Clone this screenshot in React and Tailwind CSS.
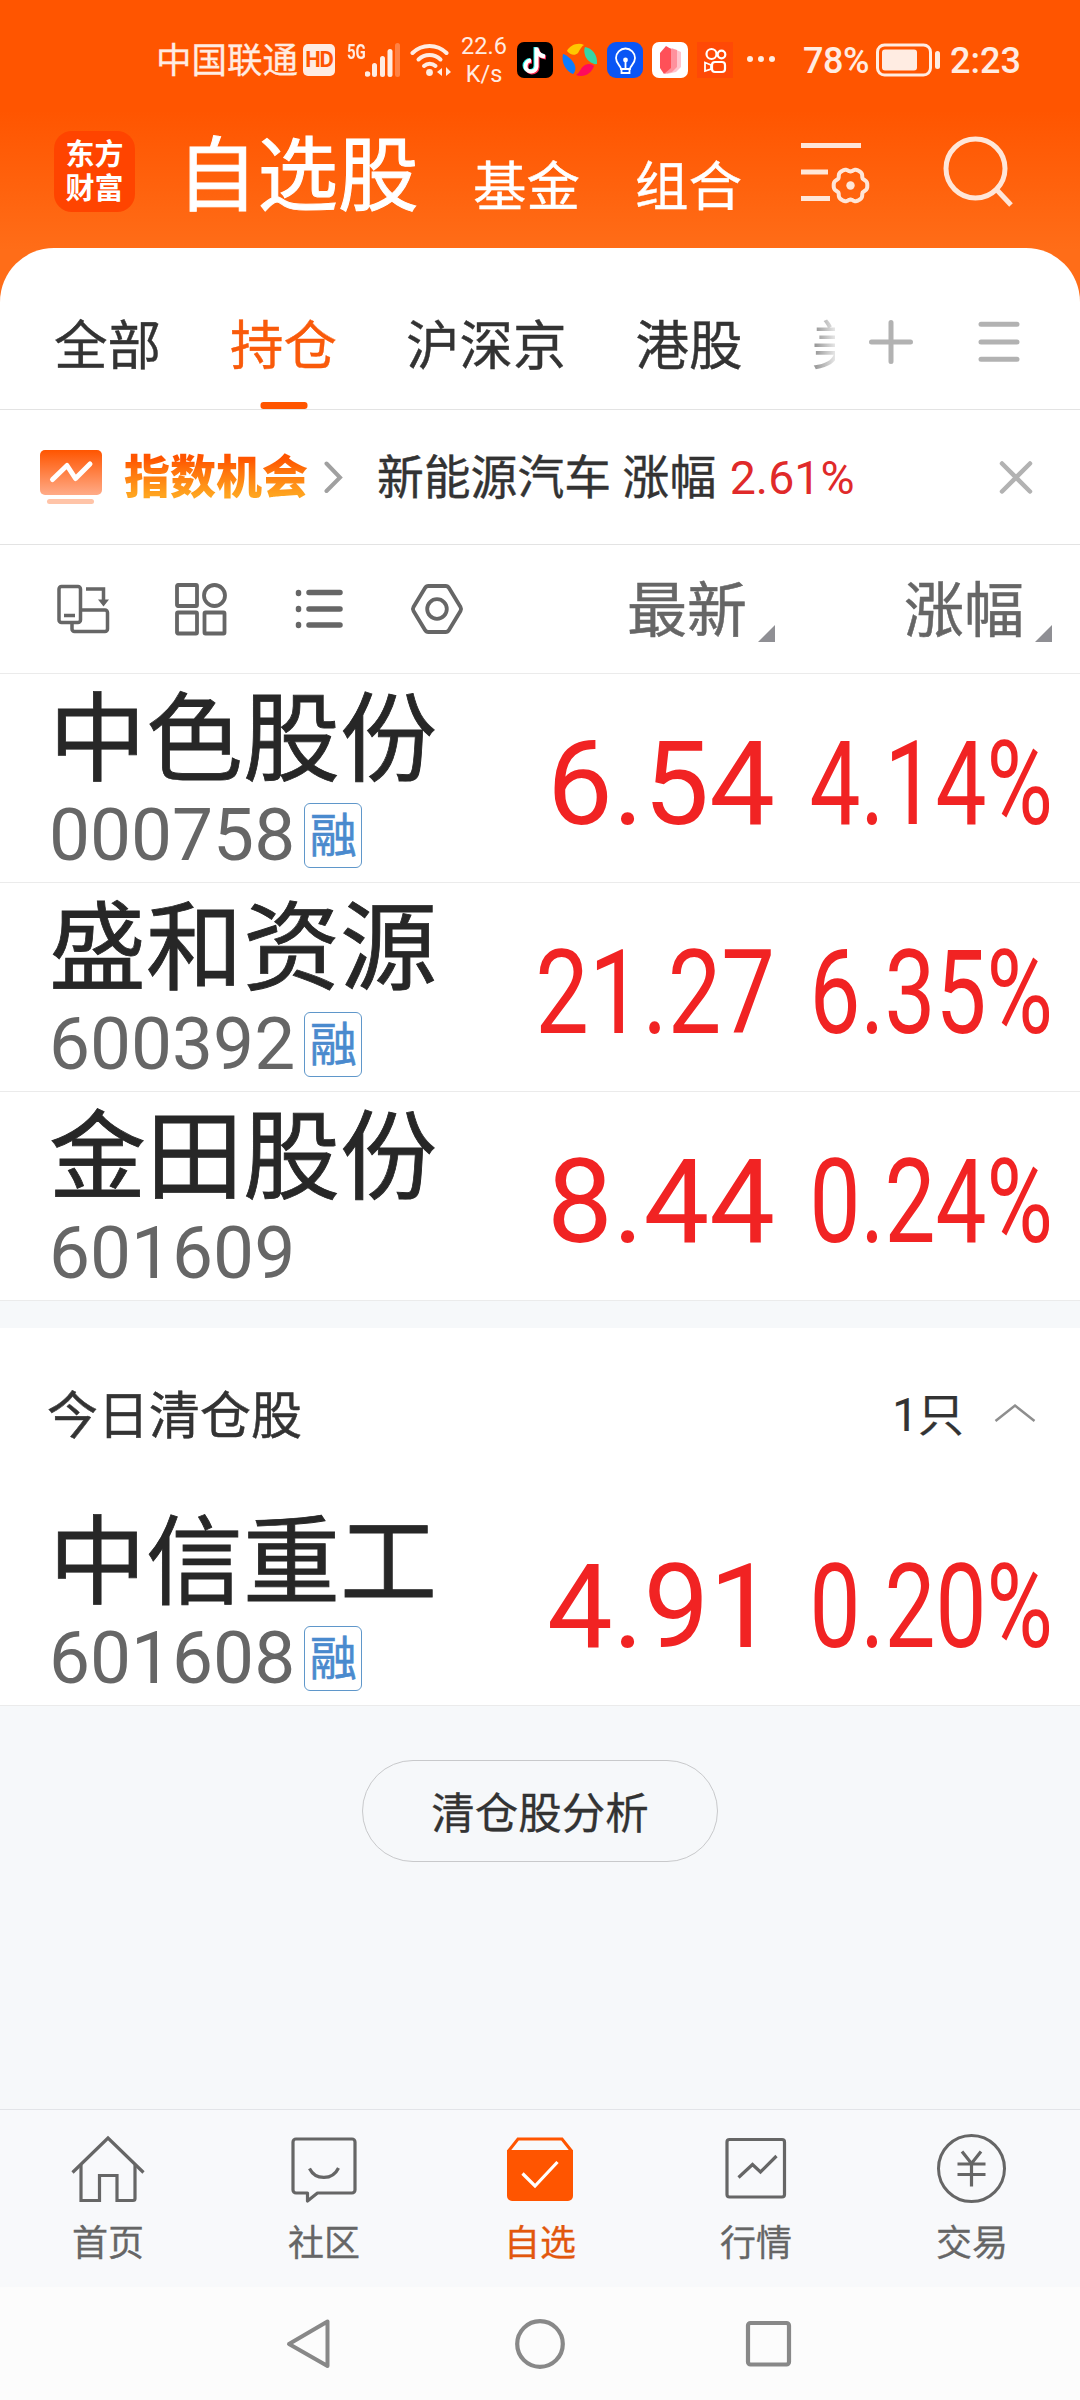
const tabs = [
  { label: '全部' },
  { label: '持仓', active: true },
  { label: '沪深京' },
  { label: '港股' },
];

const holdings = [
  { name: '中色股份', code: '000758', margin: true, price: '6.54', change: '4.14%' },
  { name: '盛和资源', code: '600392', margin: true, price: '21.27', change: '6.35%' },
  { name: '金田股份', code: '601609', margin: false, price: '8.44', change: '0.24%' },
];

const cleared = [
  { name: '中信重工', code: '601608', margin: true, price: '4.91', change: '0.20%' },
];

// six-lobed outline of the gear in the header
const gearPoints = Array.from({ length: 72 }, (_, i) => {
  const angle = (i * Math.PI) / 36;
  const radius = 15.8 + 1.4 * Math.cos(6 * angle) - 0.4 * Math.cos(12 * angle);
  return `${(50.5 + radius * Math.cos(angle)).toFixed(2)},${(45.5 + radius * Math.sin(angle)).toFixed(2)}`;
}).join(' ');

function StatusBar() {
  return (
    <div className="flex h-[118px] items-center pt-[2px] pl-[156px] text-[#ffece2]">
      <span className="mt-px w-[147px] text-[35.5px] leading-[44px] whitespace-nowrap [-webkit-text-stroke:0.3px]">中国联通</span>
      <span className="flex h-8 w-8 items-center justify-center rounded-[5px] bg-[#ffece2] text-[22px] leading-none font-bold tracking-tighter text-[#ff5500]">
        HD
      </span>

      <div className="ml-3 flex w-[54px]">
        <span className="h-[34px] w-[18px] origin-left scale-x-75 text-[20px] leading-[18px] font-bold">5G</span>
        <svg className="h-[34px] w-9" viewBox="0 0 36 34" fill="currentColor">
          <circle cx="2.500" cy="31" r="2.800" />
          <rect x="7" y="20" width="5" height="14" rx="2.500" />
          <rect x="15" y="13" width="5" height="21" rx="2.500" />
          <rect x="22.500" y="6" width="5" height="28" rx="2.500" />
          <rect x="30" y="0" width="5" height="34" rx="2.500" opacity="0.3" />
        </svg>
      </div>

      <svg className="ml-[9px] h-9 w-[42px]" viewBox="0 0 42 36" fill="none" stroke="currentColor" strokeLinecap="round">
        <path d="M2.500 11a24 24 0 0 1 34 0" strokeWidth="4" />
        <path d="M8.500 17.500a16 16 0 0 1 22 0" strokeWidth="4" />
        <path d="M14 24a8.500 8.500 0 0 1 11.500 0" strokeWidth="4" />
        <circle cx="19.500" cy="30.500" r="3.400" fill="currentColor" stroke="none" />
        <path d="M27 30l5-4v8zM41 30l-5-5v9z" fill="currentColor" stroke="none" />
      </svg>

      <div className="ml-[7px] w-[50px] text-center text-[23.500px] leading-[28px]">
        <div>22.6</div>
        <div>K/s</div>
      </div>

      <svg className="ml-[8px] h-9 w-9" viewBox="0 0 36 36">
        <rect width="36" height="36" rx="7" fill="#000" />
        <g fill="none" strokeWidth="4">
          <path d="M18.500 5v19a5.500 5.500 0 1 1-5.500-6M18.500 6c1 5 4 7.500 8.500 8" stroke="#25f4ee" />
          <path d="M20.500 6.500v19a5.500 5.500 0 1 1-5.500-6M20.500 7.500c1 5 4 7.500 8.500 8" stroke="#fe2c55" />
          <path d="M19.500 5.500v19a5.500 5.500 0 1 1-5.500-6M19.500 6.500c1 5 4 7.500 8.500 8" stroke="#fff" />
        </g>
      </svg>

      <svg className="ml-[9px] h-9 w-9" viewBox="0 0 36 36">
        <path d="M5 9C8 3 16 0 22 3c-2 1-4 4-6 8-3 3-8 2-11-2z" fill="#ffc800" />
        <path d="M23 5c7 1 13 8 12 17-4 1-11-4-12-9-1-3-1-6 0-8z" fill="#35d6a5" />
        <path d="M1 12c4 1 11 7 12 12 1 3 0 6-2 8C4 29-1 21 1 12z" fill="#0a7cff" />
        <path d="M32 24c-3 8-10 12-18 9 4-2 4-7 9-10 4-2 7-1 9 1z" fill="#ff0a5c" />
      </svg>

      <svg className="ml-[9px] h-9 w-9" viewBox="0 0 36 36" fill="none" stroke="#fff" strokeWidth="1.800">
        <rect width="36" height="36" rx="9" fill="#0a55f5" stroke="none" />
        <path d="M14 27c0-3-5-5-5-11a9.500 9.500 0 0 1 19 0c0 6-5 8-5 11zM14.500 27v4h8v-4" />
        <path d="M18.500 26v-7" />
        <circle cx="18.500" cy="18" r="1.500" fill="#fff" />
      </svg>

      <svg className="ml-[9px] h-9 w-9" viewBox="0 0 36 36">
        <rect width="36" height="36" rx="7" fill="#fff" />
        <path d="M20 6l9 4v15l-5 5-9 2z" fill="#ffc4cd" />
        <path d="M17 6l8 2v17l-5 5-7 2z" fill="#ff919d" />
        <path d="M14 4l5 3v19l-7 6L8 26V11z" fill="#ff5058" />
      </svg>

      <svg className="ml-[9px] h-9 w-9" viewBox="0 0 36 36" fill="none" stroke="#fff" strokeWidth="2.200">
        <rect width="36" height="36" fill="#ff4906" stroke="none" />
        <circle cx="14.500" cy="12" r="5" />
        <circle cx="24.500" cy="12.500" r="3.800" />
        <rect x="15" y="20" width="13" height="10" rx="3" />
        <path d="M14 23l-6-2.500v8.500l6-2z" strokeWidth="1.800" />
      </svg>

      <div className="-mt-[3px] ml-[14px] flex gap-[5px]">
        <span className="size-[6px] rounded-full bg-current" />
        <span className="size-[6px] rounded-full bg-current" />
        <span className="size-[6px] rounded-full bg-current" />
      </div>

      <span className="mt-px ml-[28px] w-[73px] text-[36px] leading-[44px] font-medium tracking-[-0.5px]">78%</span>
      <svg className="h-[34px] w-[65px]" viewBox="0 0 65 34">
        <rect x="1.500" y="2" width="53" height="30" rx="7" fill="none" stroke="currentColor" strokeWidth="3" />
        <rect x="6" y="6.500" width="35" height="21" rx="3" fill="currentColor" />
        <rect x="59" y="8" width="5" height="18" rx="2.500" fill="currentColor" />
      </svg>
      <span className="mt-px ml-[9px] text-[36px] leading-[44px] font-medium">2:23</span>
    </div>
  );
}

function Header() {
  return (
    <header className="flex h-[130px] pl-[54px] text-white">
      <div className="mt-[13px] flex h-[81px] w-[81px] flex-col items-center justify-center rounded-[18px] bg-[#ff4400] text-[29px] leading-[34px] font-bold">
        <span>东方</span>
        <span>财富</span>
      </div>
      <h1 className="mt-[11px] ml-[42px] w-[241px] text-[80.5px] leading-[96px] whitespace-nowrap [-webkit-text-stroke:1px]">
        自选股
      </h1>
      <span className="mt-[37px] ml-[55px] w-[107px] text-[53.5px] leading-[66px] [-webkit-text-stroke:0.4px]">基金</span>
      <span className="mt-[37px] ml-[55px] w-[107px] text-[53.5px] leading-[66px] [-webkit-text-stroke:0.4px]">组合</span>

      <svg className="mt-[22px] ml-[58px] h-[66px] w-[72px]" viewBox="0 0 72 66" fill="none" stroke="#ffe6d8" strokeWidth="5">
        <path d="M1 5.500h60M1 32h27M1 58.500h29" />
        <polygon points={gearPoints} strokeWidth="4" strokeLinejoin="round" />
        <circle cx="50.500" cy="45.500" r="4.200" fill="#ffe6d8" stroke="none" />
      </svg>

      <svg className="mt-[17px] ml-[71px] h-[74px] w-[74px]" viewBox="0 0 74 74" fill="none" stroke="#ffe6d8" strokeWidth="5">
        <circle cx="32.500" cy="33.500" r="29.500" />
        <path d="M53.500 54.500L68 70" />
      </svg>
    </header>
  );
}

function GroupTabs() {
  return (
    <nav className="flex h-[162px] rounded-t-[54px] border-b border-[#e3e3e3] bg-white pl-[54px] text-[53.5px] leading-[66px] text-[#333]">
      {tabs.map((tab) => (
        <div key={tab.label} className="relative mr-[69px] pt-[66px] whitespace-nowrap [-webkit-text-stroke:0.4px]">
          <span className={tab.active ? 'text-[#f95a0a]' : ''}>{tab.label}</span>
          {tab.active && (
            <span className="absolute bottom-0 left-1/2 h-[7px] w-[47px] -translate-x-1/2 rounded-[3px] bg-[#ff5500]" />
          )}
        </div>
      ))}
      {/* next tab fades out under the add button */}
      <div className="mr-[-30px] w-[54px] bg-[linear-gradient(to_right,#8c8c8c,#e6e6e6_23px,transparent_23px)] bg-clip-text pt-[66px] whitespace-nowrap text-transparent">
        美
      </div>
      <svg className="mt-[70px] ml-[31px] h-12 w-12" viewBox="0 0 48 48" stroke="#b2b2b2" strokeWidth="5" strokeLinecap="round">
        <path d="M24 4.500v39M4.500 24h39" />
      </svg>
      <svg className="mt-[70px] ml-[60px] h-12 w-12" viewBox="0 0 48 48" stroke="#b2b2b2" strokeWidth="5" strokeLinecap="round">
        <path d="M6 6.300h36M6 24h36M6 41.300h36" />
      </svg>
    </nav>
  );
}

function IndexBanner() {
  return (
    <div className="flex h-[135px] items-center border-b border-[#e3e3e3] bg-white pl-10 text-[46.5px] leading-[60px] text-[#333]">
      <svg className="h-[56px] w-[62px]" viewBox="0 0 62 56" fill="none">
        <defs>
          <linearGradient id="banner" x1="0" y1="0" x2="0" y2="1">
            <stop offset="0" stopColor="#ff5500" />
            <stop offset="1" stopColor="#ffab88" />
          </linearGradient>
        </defs>
        <rect width="62" height="45" y="1" rx="5" fill="url(#banner)" />
        <path d="M12.500 30.500L27 16.500l8.500 13L50 15" stroke="#fff" strokeWidth="5" strokeLinecap="round" strokeLinejoin="round" />
        <rect x="7" y="50" width="47" height="5" rx="2.500" fill="#ffc4a8" />
      </svg>
      <span className="ml-[22px] bg-linear-to-b from-[#ff5500] from-20% to-[#ffa41f] to-80% bg-clip-text text-[46px] font-black text-transparent">
        指数机会
      </span>
      <svg className="ml-[16px] h-[36px] w-[20px]" viewBox="0 0 20 36" fill="none" stroke="#a0a0a0" strokeWidth="4" strokeLinecap="round">
        <path d="M2.500 4.500L16 18.500 2.500 32" />
      </svg>
      <span className="mt-[2px] ml-[33px]">
        <span className="text-[46.8px] [-webkit-text-stroke:0.4px]">新能源汽车 涨幅</span>{' '}
        <span className="ml-[2px] text-[#e02a2a]">2.61%</span>
      </span>
      <svg className="mr-[46px] ml-auto h-9 w-9" viewBox="0 0 36 36" stroke="#b2b2b2" strokeWidth="4.500" strokeLinecap="round">
        <path d="M4 4.500l28 28M32 4.500l-28 28" />
      </svg>
    </div>
  );
}

function SortCell({ label, className }) {
  return (
    <div className={`flex items-center ${className}`}>
      <span className="mt-[5px] text-[60px] leading-[74px] whitespace-nowrap [-webkit-text-stroke:0.5px]">{label}</span>
      <svg className="mt-[49px] ml-[11px] h-[17px] w-[17px]" viewBox="0 0 17 17" fill="#8f8f94">
        <path d="M17 0v17H0z" />
      </svg>
    </div>
  );
}

function Toolbar() {
  return (
    <div className="flex h-[129px] items-center border-b border-[#ebebeb] bg-white pl-[55px] text-[#666]">
      <svg className="h-14 w-14" viewBox="0 0 56 56" fill="none" stroke="currentColor" strokeWidth="3.500">
        <rect x="4" y="5.500" width="21.500" height="36" rx="2.500" />
        <path d="M9 34.500h11M31 8h17.500v15M25.500 29H50a2.500 2.500 0 0 1 2.500 2.500V48a2.500 2.500 0 0 1-2.500 2.500H19.500A2.500 2.500 0 0 1 17 48v-6.500" />
        <path d="M43 18.500h11l-5.500 7z" fill="currentColor" stroke="none" />
      </svg>
      <svg className="ml-[62px] h-14 w-14" viewBox="0 0 56 56" fill="none" stroke="currentColor" strokeWidth="3.800">
        <rect x="4" y="4" width="20" height="21" rx="1" />
        <circle cx="41.500" cy="14.500" r="10.500" />
        <rect x="4" y="31.500" width="20" height="21" rx="1" />
        <rect x="31.500" y="31.500" width="20" height="21" rx="1" />
      </svg>
      <svg className="ml-[62px] h-14 w-14" viewBox="0 0 56 56" stroke="currentColor" strokeWidth="5.500" strokeLinecap="round">
        <path d="M18 11.500h31M18 28h31M18 44h31" />
        <path d="M7.500 11.500v1M7.500 27.500v1M7.500 43.500v1" />
      </svg>
      <svg className="ml-[62px] h-14 w-14" viewBox="0 0 56 56" fill="none" stroke="currentColor" strokeWidth="3.800" strokeLinejoin="round">
        <path d="M19.500 5h17a4 4 0 0 1 3.500 2l11.500 19a4 4 0 0 1 0 4l-11.500 19a4 4 0 0 1-3.500 2h-17a4 4 0 0 1-3.500-2L4.500 30a4 4 0 0 1 0-4L16 7a4 4 0 0 1 3.500-2z" />
        <circle cx="28" cy="28" r="9.800" />
      </svg>
      <SortCell label="最新" className="ml-[162px]" />
      <SortCell label="涨幅" className="ml-[129px]" />
    </div>
  );
}

function StockRow({ stock }) {
  // long prices are squeezed so that they stay inside their column
  const narrow = stock.price.length > 4;

  return (
    <div className="flex h-[209px] border-b border-[#ebebeb] bg-white pl-[49px]">
      <div className="w-[460px] pt-[11px]">
        <div className="pt-px text-[97px] leading-[108px] whitespace-nowrap text-[#272727] [-webkit-text-stroke:0.8px]">
          {stock.name}
        </div>
        <div className="flex h-[82px] items-center">
          <span className="text-[73px] leading-[82px] text-[#666]">{stock.code}</span>
          {stock.margin && (
            <span className="mt-px ml-[9px] flex h-[65px] w-[58px] items-center justify-center rounded-[6px] border border-[#5f97ca] text-[47px] leading-[62px] text-[#4a8ace] [-webkit-text-stroke:0.6px]">
              融
            </span>
          )}
        </div>
      </div>
      <div className="flex w-[266px] justify-end pt-[40px] text-[117px] leading-[140px] text-[#f12323]">
        <span className={narrow ? 'origin-right scale-x-[0.815]' : ''}>{stock.price}</span>
      </div>
      <div className="flex w-[278px] justify-end pt-[40px] text-[117px] leading-[140px] text-[#f12323]">
        <span className="origin-right scale-x-[0.775]">{stock.change}</span>
      </div>
    </div>
  );
}

function ClearedHeader() {
  return (
    <div className="flex h-[169px] items-center bg-white pt-[8px] pl-[47px] text-[#333]">
      <span className="mt-px text-[51px] leading-[64px] [-webkit-text-stroke:0.5px]">今日清仓股</span>
      <span className="-mt-[3px] ml-auto text-[46px] leading-[60px] [-webkit-text-stroke:0.2px]">1只</span>
      <svg className="-mt-[8px] mr-[43px] ml-[29px] h-6 w-11" viewBox="0 0 44 24" fill="none" stroke="#8e8e8e" strokeWidth="2.500">
        <path d="M2.500 20L22 4.500 41.500 20" />
      </svg>
    </div>
  );
}

function HomeIcon() {
  return (
    <svg className="h-[72px] w-[76px]" viewBox="0 0 76 72" fill="none" stroke="currentColor" strokeWidth="3.200">
      <path d="M2.500 38.500L38 4l35.500 34.500" />
      <path d="M11 31v35.500h18.500V41.500h17.500v25h16a2 2 0 0 0 2-2V31" />
    </svg>
  );
}

function ChatIcon() {
  return (
    <svg className="h-[72px] w-[76px]" viewBox="0 0 76 72" fill="none" stroke="currentColor" strokeWidth="3.200" strokeLinejoin="round">
      <path d="M10 5h56a3 3 0 0 1 3 3v48a3 3 0 0 1-3 3H31.500L21.500 67v-8H10a3 3 0 0 1-3-3V8a3 3 0 0 1 3-3z" />
      <path d="M23.500 34.500c6 12 23 12 29-.5" />
    </svg>
  );
}

function BoxIcon() {
  return (
    <svg className="h-[72px] w-[76px]" viewBox="0 0 76 72" fill="none">
      <path d="M6.500 17L16 5h44l9.500 12" stroke="#ff5500" strokeWidth="3" />
      <path d="M5 16h66V62a5 5 0 0 1-5 5H10a5 5 0 0 1-5-5z" fill="#ff5500" />
      <path d="M20.500 39.500L33 52l22.500-24" stroke="#fff" strokeWidth="3.200" />
    </svg>
  );
}

function TrendIcon() {
  return (
    <svg className="h-[72px] w-[76px]" viewBox="0 0 76 72" fill="none" stroke="currentColor" strokeWidth="3.200">
      <rect x="9" y="5.500" width="57.500" height="57.500" rx="2.500" />
      <path d="M20.500 43.500L34.500 30.500l8 7.500 16-16" />
    </svg>
  );
}

function TradeIcon() {
  return (
    <svg className="h-[72px] w-[76px]" viewBox="0 0 76 72" fill="none" stroke="currentColor" strokeWidth="3">
      <circle cx="37.500" cy="34.500" r="33" />
      <path d="M28 17.500l9.500 12 9.500-12M37.500 29v23.500M23.500 30h28M23.500 40.500h28" strokeWidth="3.200" />
    </svg>
  );
}

const navItems = [
  { label: '首页', icon: <HomeIcon /> },
  { label: '社区', icon: <ChatIcon /> },
  { label: '自选', icon: <BoxIcon />, active: true },
  { label: '行情', icon: <TrendIcon /> },
  { label: '交易', icon: <TradeIcon /> },
];

function BottomNav() {
  return (
    <nav className="mt-auto grid h-[178px] grid-cols-5 border-t border-[#e2e4e8] bg-[#f8f9fb]">
      {navItems.map((item) => (
        <div
          key={item.label}
          className={`flex flex-col items-center pt-[24px] ${item.active ? 'text-[#e2570d]' : 'text-[#666]'}`}
        >
          {item.icon}
          <span className="mt-[16px] text-[36px] leading-[44px] [-webkit-text-stroke:0.3px]">{item.label}</span>
        </div>
      ))}
    </nav>
  );
}

function SystemNav() {
  return (
    <div className="flex h-[113px] items-center bg-[#fcfcfc] pl-[285px]">
      <svg className="h-[52px] w-[50px]" viewBox="0 0 50 52" fill="none" stroke="#888" strokeWidth="4" strokeLinejoin="round">
        <path d="M42.500 3.500v44.500L4 26z" />
      </svg>
      <svg className="ml-[179px] h-[52px] w-[52px]" viewBox="0 0 52 52" fill="none" stroke="#888" strokeWidth="4.200">
        <circle cx="26" cy="26" r="22.800" />
      </svg>
      <svg className="ml-[177px] h-[52px] w-[52px]" viewBox="0 0 52 52" fill="none" stroke="#888" strokeWidth="4.200">
        <rect x="5" y="5" width="41" height="41.500" rx="2.500" />
      </svg>
    </div>
  );
}

export default function App() {
  return (
    <div className="flex h-[2400px] w-[1080px] flex-col overflow-hidden bg-[#f6f8fa] font-[Roboto,'Noto_Sans_CJK_SC',sans-serif]">
      <div className="bg-[linear-gradient(to_bottom,#ff5500_110px,#ff6d18_250px)]">
        <StatusBar />
        <Header />
        <GroupTabs />
      </div>
      <IndexBanner />
      <Toolbar />

      {holdings.map((stock) => (
        <StockRow key={stock.code} stock={stock} />
      ))}

      <section className="mt-[27px]">
        <ClearedHeader />
        {cleared.map((stock) => (
          <StockRow key={stock.code} stock={stock} />
        ))}
      </section>

      <button
        type="button"
        className="mx-auto mt-[54px] h-[102px] w-[356px] rounded-full border border-[#c8c9cb] pt-[7px] text-[43.5px] leading-[60px] text-[#333] [-webkit-text-stroke:0.3px]"
      >
        清仓股分析
      </button>

      <BottomNav />
      <SystemNav />
    </div>
  );
}
